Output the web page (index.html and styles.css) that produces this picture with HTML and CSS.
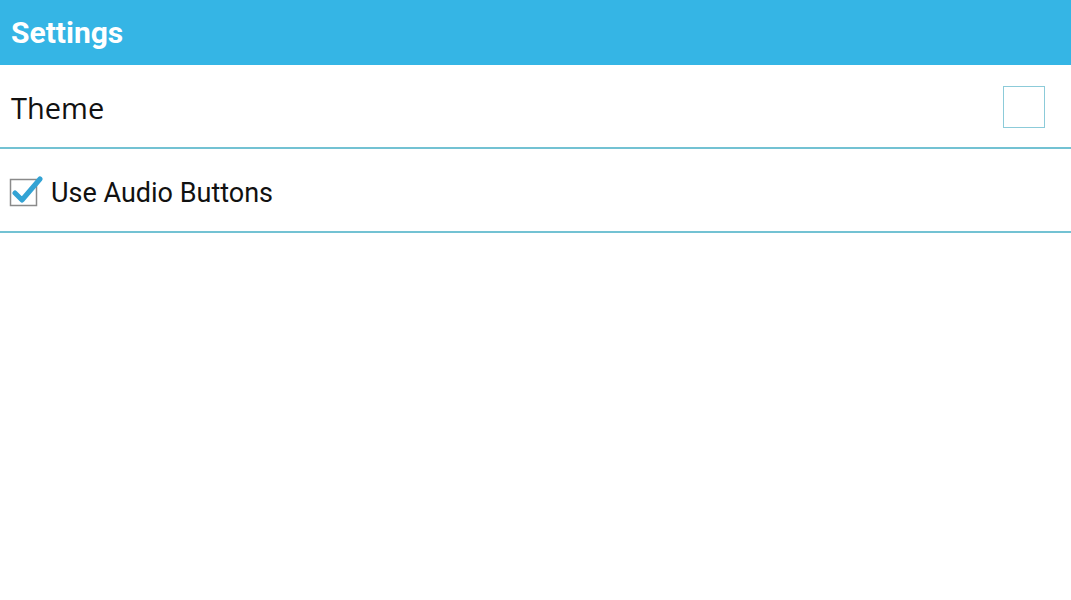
FILE: index.html
```html
<!DOCTYPE html>
<html lang="en">
<head>
  <meta charset="UTF-8">
  <title>Settings</title>
  <link rel="stylesheet" href="styles.css">
</head>
<body>

  <div class="bar">
    <h1>Settings</h1>
  </div>

  <div class="row">
    <span class="label theme">Theme</span>
    <span class="swatch"></span>
  </div>

  <div class="row audio">
    <span class="check">
      <svg width="34" height="34" viewBox="0 0 34 34">
        <rect x="1.5" y="6.5" width="26" height="26" fill="#fff" stroke="#8a8a8a" stroke-width="1.5"/>
        <path d="M6 20 L13 27 L31 6" fill="none" stroke="#33a3d4" stroke-width="5" stroke-linecap="round" stroke-linejoin="round"/>
      </svg>
    </span>
    <span class="label">Use Audio Buttons</span>
  </div>

</body>
</html>
```

FILE: styles.css
```css
body {
  margin: 0;
  background-color: #fff;
  font-family: Roboto, "Noto Sans", sans-serif;
}
.bar {
  background-color: #35b5e5;
  height: 65px;
  display: flex;
  align-items: center;
  padding-left: 11px;
}
h1 {
  margin: 0;
  color: #fff;
  font-size: 30px;
  font-weight: bold;
}
.row {
  box-sizing: border-box;
  height: 84px;
  display: flex;
  align-items: center;
  padding: 2px 26px 0 11px;
  border-bottom: 2px solid #73c2d3;
}
.audio {
  padding-top: 5px;
}
.label {
  flex: 1;
  color: #111;
  font-size: 27px;
}
.theme {
  font-family: "Open Sans", sans-serif;
  font-size: 29px;
}
.swatch {
  width: 40px;
  height: 40px;
  border: 1px solid #8ccbd9;
}
.check {
  margin: -6px 8px 0 -2px;
  display: flex;
}
```
